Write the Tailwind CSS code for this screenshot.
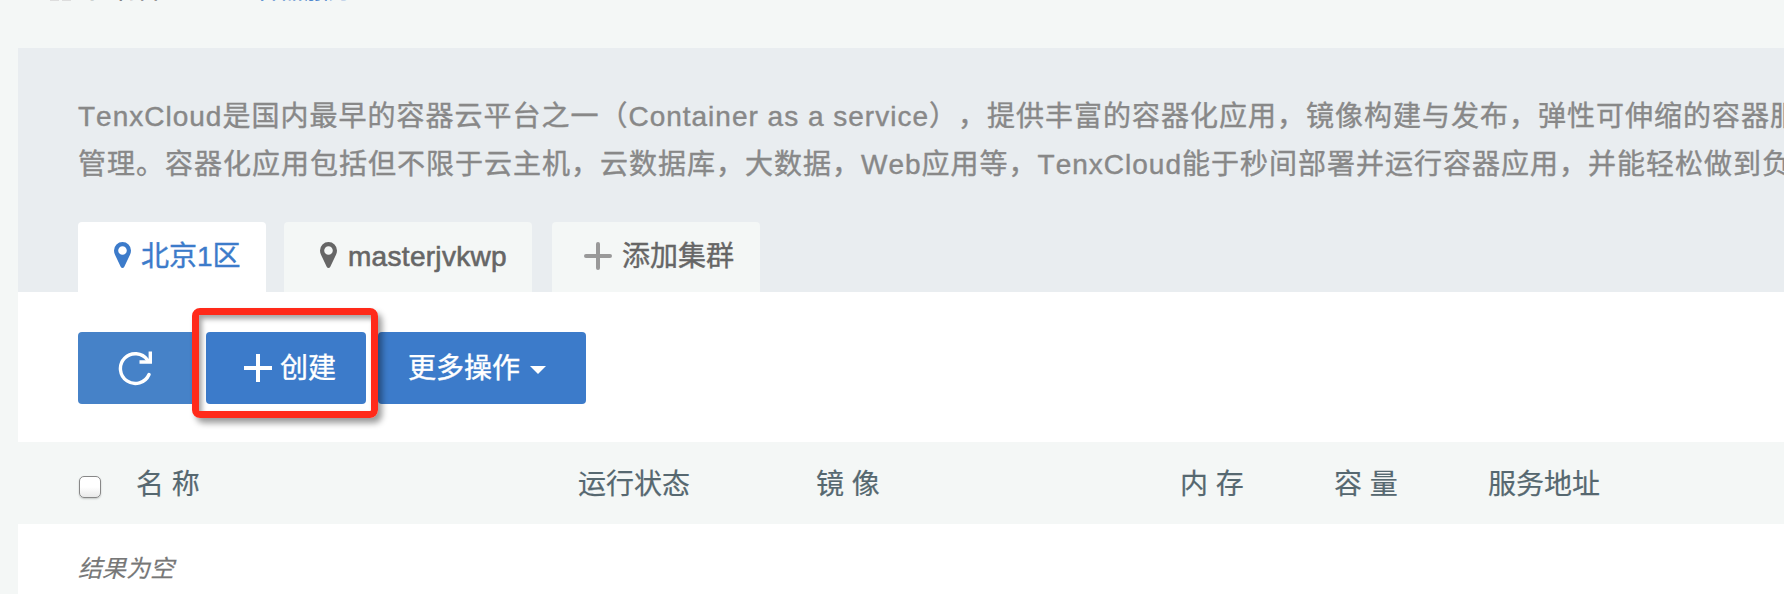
<!DOCTYPE html>
<html lang="zh-CN">
<head>
<meta charset="utf-8">
<title>TenxCloud</title>
<script src="https://cdn.jsdelivr.net/npm/@tailwindcss/browser@4"></script>
</head>
<body class="w-[1784px] h-[594px] overflow-hidden bg-[#f4f7f6] font-['Liberation_Sans','Noto_Sans_CJK_SC',sans-serif] text-[28px] leading-[40px] [font-kerning:none] [text-spacing-trim:space-all] [-webkit-text-stroke:0.4px_currentColor]">
<nav class="h-12 pl-[18px] overflow-hidden">
  <div class="-mt-[26px] flex h-8 items-start pl-8 text-[24px] leading-8 text-[#666]">
    <svg class="mt-[15px] w-[22px] h-[14px]" viewBox="0 0 22 14" fill="#ddd"><path d="M0 0h9v12H0zM12 0h9v12h-9z"/></svg>
    <span class="ml-[17px] w-[167px]">控制台</span>
    <span class="text-[#3c7bca]">容器服务</span>
  </div>
</nav>
<main class="ml-[18px] -mt-0 h-[546px] bg-white overflow-hidden">
  <section class="h-[244px] bg-[#e9edf0] pl-[60px] pt-[45px]">
    <p class="whitespace-nowrap leading-[48px] tracking-[1px] text-[#888]">TenxCloud是国内最早的容器云平台之一（Container as a service），提供丰富的容器化应用，镜像构建与发布，弹性可伸缩的容器服<br>管理。容器化应用包括但不限于云主机，云数据库，大数据，Web应用等，TenxCloud能于秒间部署并运行容器应用，并能轻松做到负</p>
    <div class="mt-[33px] flex">
      <div class="flex h-[70px] w-[188px] rounded-t bg-white pl-9 pt-[14px] text-[#3c7bca]">
        <svg class="mt-[6px] mr-[10px] w-[17px] h-[26px]" viewBox="0 0 17 26" fill="currentColor"><path fill-rule="evenodd" d="M8.500 0A8.500 8.500 0 0 0 0 8.500c0 1.600.4 3 1 4.200L6.700 24.800c.8 1.600 2.800 1.600 3.600 0L16 12.700c.6-1.200 1-2.600 1-4.200A8.500 8.500 0 0 0 8.500 0zm0 4.200a4.300 4.300 0 1 1 0 8.600 4.300 4.300 0 0 1 0-8.600z"/></svg>
        <span class="mt-px">北京1区</span>
      </div>
      <div class="ml-[18px] flex h-[70px] w-[248px] rounded-t bg-[#f4f7f6] pl-9 pt-[14px] text-[#666]">
        <svg class="mt-[6px] mr-[11px] w-[17px] h-[26px]" viewBox="0 0 17 26" fill="currentColor"><path fill-rule="evenodd" d="M8.500 0A8.500 8.500 0 0 0 0 8.500c0 1.600.4 3 1 4.200L6.700 24.800c.8 1.600 2.800 1.600 3.600 0L16 12.700c.6-1.200 1-2.600 1-4.200A8.500 8.500 0 0 0 8.500 0zm0 4.200a4.300 4.300 0 1 1 0 8.600 4.300 4.300 0 0 1 0-8.600z"/></svg>
        <span class="mt-px tracking-[0.3px] [-webkit-text-stroke:0.6px_currentColor]">masterjvkwp</span>
      </div>
      <div class="ml-5 flex h-[70px] w-[208px] rounded-t bg-[#f4f7f6] pl-8 pt-[14px] text-[#666]">
        <svg class="mt-[6px] mr-[10px] size-7" viewBox="0 0 28 28" stroke="#999" stroke-width="4" stroke-linecap="round"><path d="M14 2v24M2 14h24"/></svg>
        <span class="mt-px">添加集群</span>
      </div>
    </div>
  </section>
  <div class="relative flex h-[150px] pl-[60px] pt-10 text-white">
    <button class="flex h-[72px] w-[116px] rounded-l bg-[#4682c8] pl-10 pt-[18px]">
      <svg class="size-9" viewBox="0 0 36 36" fill="none" stroke="currentColor" stroke-width="3.4"><path d="M31 24.500A14.900 14.900 0 1 1 29.500 10" stroke-linecap="round"/><path d="M32.300 1.500v10.500H21.500"/></svg>
    </button>
    <button class="ml-3 flex h-[72px] w-40 rounded bg-[#3c7bca] pl-[38px] pt-4">
      <svg class="mt-[6px] mr-2 size-7" viewBox="0 0 28 28" stroke="currentColor" stroke-width="4"><path d="M14 0v28M0 14h28"/></svg>
      <span class="mt-px">创建</span>
    </button>
    <button class="ml-3 flex h-[72px] w-52 rounded bg-[#3c7bca] pl-[30px] pt-4">
      <span class="mt-px">更多操作</span>
      <svg class="mt-[18px] ml-[10px] w-4 h-2" viewBox="0 0 16 8" fill="currentColor"><path d="M0 0h16L8 8z"/></svg>
    </button>
    <div class="absolute left-[174px] top-4 h-[110px] w-[186px] rounded-lg border-[7px] border-[#ff2a1a] shadow-[4px_5px_6px_rgba(0,0,0,0.4),inset_3px_4px_5px_rgba(0,0,0,0.35)]"></div>
  </div>
  <div class="flex h-[82px] bg-[#f4f7f6] pl-[60px] pt-[23px] text-[#566870] [-webkit-text-stroke:0.2px_currentColor]">
    <span class="mt-[11px] ml-px mr-[35px] size-[22px] rounded-[5px] border border-[#888] bg-linear-to-b from-white from-50% to-[#e9e9e9] shadow-[0_1px_2px_rgba(0,0,0,0.2)]"></span>
    <span class="w-[442px]">名 称</span>
    <span class="w-[238px]">运行状态</span>
    <span class="w-[364px]">镜 像</span>
    <span class="w-[154px]">内 存</span>
    <span class="w-[154px]">容 量</span>
    <span>服务地址</span>
  </div>
  <div class="pl-[60px] pt-[25px] text-[24px] italic text-[#777] [-webkit-text-stroke:0.2px_currentColor]">结果为空</div>
</main>
</body>
</html>
